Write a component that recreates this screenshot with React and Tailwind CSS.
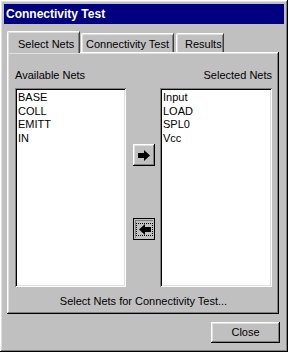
import React from "react";

const raised = "shadow-[inset_-1px_-1px_0_#000,inset_1px_1px_0_#fff,inset_-2px_-2px_0_#808080,inset_2px_2px_0_#dfdfdf]";
const sunken = "shadow-[inset_1px_1px_0_#808080,inset_-1px_-1px_0_#fff,inset_2px_2px_0_#000,inset_-2px_-2px_0_#dfdfdf]";

function ArrowRight() {
  return (
    <svg width="13" height="11" viewBox="0 0 13 11">
      <polygon points="0,3 6,3 6,0 12,5.5 6,11 6,8 0,8" fill="#000" />
    </svg>
  );
}
function ArrowLeft() {
  return (
    <svg width="13" height="11" viewBox="0 0 13 11">
      <polygon points="13,3 7,3 7,0 1,5.5 7,11 7,8 13,8" fill="#000" />
    </svg>
  );
}

function ListBox({ items }) {
  return (
    <div className={`bg-white ${sunken} h-[199px] pt-[3px] pl-[3px] flex flex-col`}>
      {items.map((t) => (
        <div key={t} className="h-[13.5px] leading-[13px] text-black">{t}</div>
      ))}
    </div>
  );
}

export default function App() {
  return (
    <div
      className={`w-[288px] h-[352px] bg-[#c0c0c0] ${raised} p-[4px] flex flex-col text-[11px] text-black`}
      style={{ fontFamily: '"Liberation Sans", Arial, sans-serif' }}
    >
      <div className="h-[20px] bg-[#000080] text-white font-bold text-[12px] leading-[20px] pl-[2px]">
        Connectivity Test
      </div>
      <div className="ml-[3px] mr-[5px] mt-[7px] flex flex-col">
        <div className="flex items-end h-[21px] relative z-10">
          <div className="w-[73px] h-[22px] -mb-[1px] bg-[#c0c0c0] border-l border-t border-white rounded-tl-[2px] border-r border-r-[#404040] flex items-start pt-[4px] pl-[10px] shadow-[inset_1px_1px_0_#dfdfdf,inset_-1px_0_0_#808080]">
            Select Nets
          </div>
          <div className="w-[93px] h-[19px] ml-[1px] border-l border-t border-white rounded-tl-[2px] border-r border-r-[#404040] flex items-start pt-[2px] pl-[4px] shadow-[inset_1px_1px_0_#dfdfdf,inset_-1px_0_0_#808080]">
            Connectivity Test
          </div>
          <div className="w-[48px] h-[19px] ml-[2px] border-l border-t border-white rounded-tl-[2px] border-r border-r-[#404040] flex items-start pt-[2px] pl-[8px] shadow-[inset_1px_1px_0_#dfdfdf,inset_-1px_0_0_#808080]">
            Results
          </div>
        </div>
        <div className={`h-[262px] ${raised} pt-[17px] pl-[8px] pr-[7px] flex flex-col`}>
          <div className="flex justify-between h-[19px] leading-[13px]">
            <span>Available Nets</span>
            <span>Selected Nets</span>
          </div>
          <div className="flex">
            <div className="w-[111px]">
              <ListBox items={["BASE", "COLL", "EMITT", "IN"]} />
            </div>
            <div className="ml-[7px] w-[22px] flex flex-col pt-[56px]">
              <div className={`h-[22px] ${raised} flex items-center justify-center`}>
                <ArrowRight />
              </div>
              <div className="mt-[52px] h-[22px] border border-black p-[1px]">
                <div className="h-full shadow-[inset_1px_1px_0_#808080] flex items-center justify-center">
                  <div className="outline outline-1 outline-dotted outline-black px-[1px] flex items-center">
                    <ArrowLeft />
                  </div>
                </div>
              </div>
            </div>
            <div className="ml-[5px] w-[112px]">
              <ListBox items={["Input", "LOAD", "SPL0", "Vcc"]} />
            </div>
          </div>
          <div className="text-center mt-[8px] leading-[13px]">Select Nets for Connectivity Test...</div>
        </div>
      </div>
      <div className="flex justify-end mt-[8px] mr-[4px]">
        <div className={`w-[69px] h-[21px] ${raised} flex items-center justify-center`}>Close</div>
      </div>
    </div>
  );
}
